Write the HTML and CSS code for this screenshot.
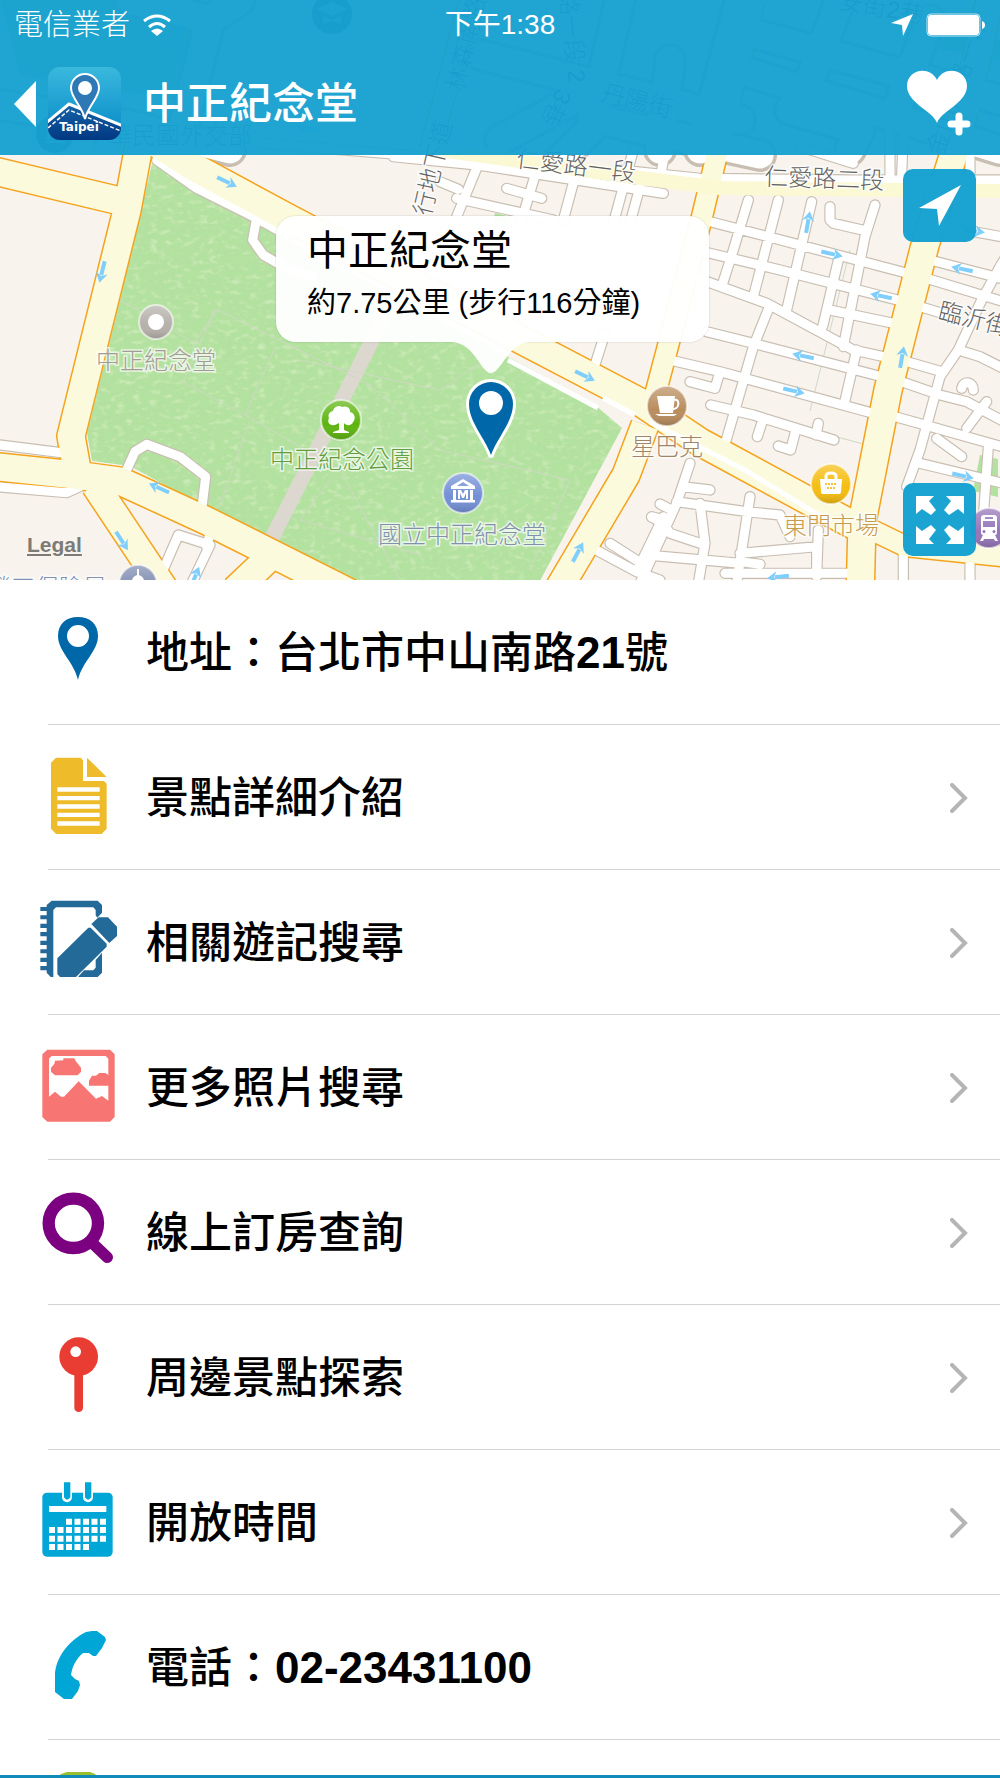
FILE: index.html
```
<!DOCTYPE html>
<html lang="zh-Hant">
<head>
<meta charset="utf-8">
<meta name="viewport" content="width=device-width, initial-scale=1">
<title>中正紀念堂</title>
<link rel="stylesheet" href="styles.css">
</head>
<body>
<div class="screen">
  <section class="stage">
    <svg class="map" viewBox="0 0 1000 580" preserveAspectRatio="xMidYMid slice" aria-hidden="true">
      <defs>
        <path id="park" d="M153 160L197 193L260 225L505 355L595 405L622 428L535 590L365 590L278 540L205 507L130 466L92 461L87 433L120 300Z"/>
        <clipPath id="park-clip"><use href="#park"/></clipPath>
        <filter id="grass" x="0" y="0" width="100%" height="100%">
          <feTurbulence type="fractalNoise" baseFrequency="0.12 0.2" numOctaves="2" seed="4"/>
          <feColorMatrix values="0 0 0 0 1  0 0 0 0 1  0 0 0 0 0.85  3 0 0 0 -1.5"/>
        </filter>
        <linearGradient id="shine" x2="0" y2="1"><stop offset="0" stop-color="#fff" stop-opacity=".3"/><stop offset=".6" stop-color="#fff" stop-opacity="0"/><stop offset="1" stop-color="#000" stop-opacity=".18"/></linearGradient>
        <g id="way"><path class="way" d="M-11 -2H3V2H-11Z"/><path class="way" d="M11 0L1 -6L4 0L1 6Z"/></g>
        <g id="streets">
          <g transform="translate(620 150) scale(.33333)">
            <path d="M385 150L340 300L305 410M475 150L400 440M575 155L500 480M765 165L735 260L670 590M655 330L608 530M450 465L400 590L310 900M710 600L672 765M270 215L520 280L870 372M250 305L480 360L840 452M220 380L440 460L700 600L800 622M260 545L400 580L800 684M150 630L300 665L760 790M272 765L400 795L642 870M210 695L285 715L297 675M595 820L588 855M425 820L412 860M475 888L512 900L525 850M630 480L830 522M630 170V210L640 220L740 243"/>
            <path d="M930 330L1200 400M920 385L1200 470M900 470L1000 500M860 635L965 665M845 695L960 735L1040 755L1200 840M825 800L1200 905M1200 250L1140 350L1085 450L1015 600L960 680L900 900L860 1010M1015 600L1080 620L1200 680M1025 715C1030 690 1060 695 1060 720M1100 755L1040 835M950 865L1025 920M900 940L1200 1012M1105 890L1090 1100M950 225L1200 270"/>
            <path d="M210 940L170 1060L60 1300M190 1010L270 1020M390 1040L350 1300M170 1055L380 1085L480 1095L510 1160M240 1060L255 1180L235 1300M120 1062L155 1080M95 1102L130 1120L150 1150L240 1180M-30 1180L80 1250M80 1215L360 1240M360 1210L590 1190L590 1280M595 1140L590 1280M360 1235L420 1243M315 1270L690 1270M850 1210V1300M1050 1240V1300"/>
            <path d="M40 0L-20 220M140 -20L125 60M0 60L240 85L700 90L1140 90M540 -10L700 40M810 -60V80M850 -60L845 80M1050 0V80"/>
          </g>
          <g transform="translate(260 150) scale(.33333)">
            <path d="M660 30L590 200M590 145L880 210M830 60L785 210M740 115L845 145M945 80L910 210M1140 110L1110 220M540 95L595 118M1035 550L1000 660M990 1190L1130 1265L1200 1290M1210 1100L1130 1265M1175 1100L1220 1112M400 20L650 45L1210 130M0 -20L500 20"/>
          </g>
          <g transform="translate(0 150) scale(.33333)">
            <path d="M0 885L185 908M-10 1010L200 1028L240 1010M380 960L405 905L440 883L540 920L617 980L605 1080M768 215L758 270L790 315L860 355L940 380M470 30L590 115L770 205L860 255M485 1270L535 1155L630 1185L575 1300M630 1150L620 1190"/>
          </g>
          <path d="M130 0L210 20L180 140M210 20L240 0M0 105L130 125L230 150M620 0L590 130L560 160M480 55L600 85L740 120M740 0L700 150M500 140L600 85M740 30L1000 100M740 70L1000 150M840 0L810 80M930 20L900 100M600 120L760 155M670 60L660 150M790 110L860 130L850 150"/>
        </g>
        <g id="avenues">
          <path class="w-major" d="M140 140L127 210L71 436L78 475M-10 170L120 201M-10 466L75 475L120 481L205 520L360 598M95 485L165 590M120 120L190 165L290 219L640 402L700 442L855 526M645 425L626 475L555 595M235 590L272 555M860 600L862 522L888 390L925 245L955 150L990 0"/>
          <path class="w-minor" d="M655 395L700 225L718 150L755 0M470 0L430 150M855 522L905 546L1010 557"/>
        </g>
      </defs>

      <rect class="land" width="1000" height="580"/>
      <path class="lawn" d="M0 0H200L175 100L20 75ZM980 455l18 4v38l-25 -6ZM495 213l16 4 -4 8 -14 -4ZM930 30L1000 40V60L920 45Z"/>
      <use class="lawn" href="#park"/>
      <rect x="80" y="150" width="550" height="430" filter="url(#grass)" clip-path="url(#park-clip)" opacity=".3"/>
      <path class="mall" d="M385 315L272 538"/>
      <path class="paths" d="M120 300L195 343L216 309L370 385L440 450L570 480L530 570M216 309L183 382L245 415L275 348M245 415L340 470L400 580M300 360L440 390L500 350M250 420L220 505M330 480L300 520L420 555M810 411L850 250M830 435L885 450"/>

      <use class="street-edge" href="#streets"/>
      <use class="avenue-edge" href="#avenues"/>
      <use class="street" href="#streets"/>
      <use class="avenue" href="#avenues"/>
      <path class="boulevard" d="M440 150L640 178L720 188L1010 191"/>
      <path class="lane" d="M508 360L598 408M603 398L635 415M650 422L745 470L830 522"/>

      <use href="#way" transform="translate(227 182) rotate(26)"/>
      <use href="#way" transform="translate(102 272) rotate(104)"/>
      <use href="#way" transform="translate(159 488) rotate(204)"/>
      <use href="#way" transform="translate(122 541) rotate(57)"/>
      <use href="#way" transform="translate(195 577) rotate(-68)"/>
      <use href="#way" transform="translate(585 376) rotate(26)"/>
      <use href="#way" transform="translate(578 552) rotate(-62)"/>
      <use href="#way" transform="translate(808 222) rotate(-80)"/>
      <use href="#way" transform="translate(832 254) rotate(13)"/>
      <use href="#way" transform="translate(881 296) rotate(192)"/>
      <use href="#way" transform="translate(803 356) rotate(192)"/>
      <use href="#way" transform="translate(794 391) rotate(13)"/>
      <use href="#way" transform="translate(902 357) rotate(-80)"/>
      <use href="#way" transform="translate(962 269) rotate(192)"/>
      <use href="#way" transform="translate(974 231) rotate(8)"/>
      <use href="#way" transform="translate(963 476) rotate(13)"/>
      <use href="#way" transform="translate(778 577) rotate(174)"/>
      <use href="#way" transform="translate(178 34) rotate(-70)"/>
      <use href="#way" transform="translate(308 128) rotate(188)"/>

      <g class="road-name">
        <text x="824" y="187" transform="rotate(2 824 187)">仁愛路二段</text>
        <text x="575" y="174" transform="rotate(7 575 174)">仁愛路一段</text>
        <text x="972" y="327" transform="rotate(14 972 327)">臨沂街</text>
        <text x="441" y="170" transform="rotate(-77 441 170)">行地下道</text>
        <text x="474" y="46" transform="rotate(-77 474 46)">林森南路</text>
        <text x="635" y="109" transform="rotate(14 635 109)">丹陽街</text>
        <text x="880" y="16" transform="rotate(10 880 16)">安街2巷</text>
        <text x="965" y="88" transform="rotate(-72 965 88)">金山南路一段</text>
        <text x="564" y="38" transform="rotate(84 564 38)">路一段 2</text>
        <text x="549" y="104" transform="rotate(116 549 104)">3巷</text>
      </g>
      <g class="place">
        <text x="156" y="369" fill="#a39c93">中正紀念堂</text>
        <text x="342" y="468" fill="#5f9e3c">中正紀念公園</text>
        <text x="462" y="543" fill="#7f92ad">國立中正紀念堂</text>
        <text x="667" y="455" fill="#a18569">星巴克</text>
        <text x="831" y="534" fill="#c59c50">東門市場</text>
        <text x="47" y="596" fill="#7f92b8">勞工保險局</text>
        <text x="168" y="144" fill="#5b6f92">中華民國外交部</text>
      </g>

      <g class="poi" transform="translate(156 322)"><circle r="17" fill="#b5b0aa"/><circle class="rim" r="17"/><circle r="8" fill="#fff"/></g>
      <g class="poi" transform="translate(341 420)"><circle r="20" fill="#5db50f"/><circle class="rim" r="20"/><path fill="#fff" d="M-2 10V3L-6 5C-12 6-14 2-12-2C-14-6-10-9-8-9C-7-14-1-15 1-13C6-15 10-11 9-8C14-7 15-1 12 2C11 6 5 6 3 3V10L8 12V13H-8V12Z"/></g>
      <g class="poi" transform="translate(463 493)"><circle r="20" fill="#7390d6"/><circle class="rim" r="20"/><path fill="#fff" fill-rule="evenodd" d="M0-14L12-7V-4H-12V-7ZM0-11L-6-7H6ZM-10-3H-7V7H-10ZM7-3H10V7H7ZM-5 6V-3H-2L0 1L2-3H5V6H3V0L1 5H-1L-3 0V6ZM-12 7H12V9.500H-12Z"/></g>
      <g class="poi" transform="translate(667 406)"><circle r="20" fill="#b98d5e"/><circle class="rim" r="20"/><path fill="#fff" d="M-10-10H8L6 7H-7Z"/><path d="M7-6C13-8 13 3 6 3" fill="none" stroke="#fff" stroke-width="2"/><path fill="#fff" d="M-12 8H10L7 10H-8Z"/></g>
      <g class="poi" transform="translate(831 484)"><circle r="20" fill="#f5bd0e"/><circle class="rim" r="20"/><path d="M-5-4V-8C-5-12 5-12 5-8V-4" fill="none" stroke="#fff" stroke-width="3"/><path fill="#fff" d="M-11-5H11L10 8Q10 10 8 10H-8Q-10 10-10 8Z"/><path d="M-6 0H6M-4 4H4" stroke="#f2c33a" stroke-width="2" stroke-dasharray="2 1"/></g>
      <g class="poi" transform="translate(989 528)"><circle r="20" fill="#9575b8"/><circle class="rim" r="20"/><path fill="#fff" fill-rule="evenodd" d="M-5-13H5Q8-13 8-10V5Q8 7 6 7L9 13H6L5 11H-5L-6 13H-9L-6 7Q-8 7-8 5V-10Q-8-13-5-13ZM-4-11V-9H4V-11ZM-6-7V-1H6V-7ZM-5 2A1.500 1.500 0 1 0-5 5A1.500 1.500 0 1 0-5 2ZM5 2A1.500 1.500 0 1 0 5 5A1.500 1.500 0 1 0 5 2Z"/></g>
      <g class="poi" transform="translate(138 584)"><circle r="19" fill="#7f8db0"/><circle class="rim" r="19"/><path fill="#fff" d="M-1-15H1V-9Q6-7 6-3H-6Q-6-7-1-9Z"/></g>
      <g class="poi" transform="translate(332 14)"><circle r="20" fill="#5b6f92"/><path fill="#bccbe0" d="M-16-5L0-12L16-5L0 2ZM-9 2L0 6L9 2V10L0 7L-9 10Z"/></g>
      <g class="poi" transform="translate(55 134)"><circle r="19" fill="#5b6f92"/><path fill="#bccbe0" d="M-10 9H10V7H-10ZM-8-4H-5V6H-8ZM-1-4H1V6H-1ZM5-4H8V6H5ZM-10-6L0-12L10-6Z"/></g>

      <path class="pin" d="M491 455C485 438 469 422 469 404A22 22 0 0 1 513 404C513 422 497 438 491 455Z"/>
      <circle cx="491" cy="403" r="12" fill="#fff"/>
    </svg>

    <header class="header">
      <div class="status">
        <div class="carrier">
          <span>電信業者</span>
          <svg width="30" height="22" viewBox="0 0 30 22" aria-hidden="true"><path d="M2 7Q15 -3 28 7M7 13Q15 6 23 13" fill="none" stroke="#fff" stroke-width="3"/><path d="M15 22L9 17Q15 12 21 17Z" fill="#fff"/></svg>
        </div>
        <time class="clock">下午1:38</time>
        <div class="power">
          <svg width="22" height="22" viewBox="0 0 22 22" aria-hidden="true"><path d="M22 0L12 22L11 11L0 9Z" fill="#fff"/></svg>
          <svg width="60" height="24" viewBox="0 0 60 24" aria-hidden="true"><rect x="1" y="1" width="53" height="22" rx="4" fill="none" stroke="#fff" stroke-opacity=".7"/><rect x="2" y="2" width="51" height="20" rx="3" fill="#fff"/><path d="M56 8Q59 9 59 12T56 16Z" fill="#fff"/></svg>
        </div>
      </div>
      <nav class="nav">
        <button class="back" type="button" aria-label="返回">
          <svg width="22" height="46" viewBox="0 0 22 46" aria-hidden="true"><path d="M0 23L22 0V46Z" fill="#fff"/></svg>
          <svg width="73" height="73" viewBox="0 0 73 73" aria-hidden="true">
            <defs>
              <linearGradient id="tile" x2="0" y2="1"><stop offset="0" stop-color="#3ab9dd"/><stop offset=".7" stop-color="#1496cd"/></linearGradient>
              <linearGradient id="ground" x2="0" y2="1"><stop offset="0" stop-color="#1565a8"/><stop offset="1" stop-color="#00347f"/></linearGradient>
              <clipPath id="tile-clip"><rect width="73" height="73" rx="12"/></clipPath>
            </defs>
            <g clip-path="url(#tile-clip)">
              <rect width="73" height="73" fill="url(#tile)"/>
              <path d="M-2 56L21 37L75 59V76H-2Z" fill="url(#ground)" stroke="#fff" stroke-width="3"/>
              <path d="M0 61L21 43L73 64" fill="none" stroke="#fff" stroke-width="1.500" stroke-dasharray="4 2"/>
              <path d="M37 52C34 39 23 31 23 21A14 14 0 0 1 51 21C51 31 40 39 37 52Z" fill="#2e78b6" stroke="#fff" stroke-width="2"/>
              <circle cx="37" cy="21" r="7" fill="#fff"/>
              <text class="tile-name" x="31" y="64">Taipei</text>
            </g>
          </svg>
        </button>
        <h1 class="title">中正紀念堂</h1>
        <button class="favorite" type="button" aria-label="加入最愛">
          <svg width="66" height="68" viewBox="0 0 66 68" aria-hidden="true"><path d="M31 53C27 41 1 33 1 16C1 -1 24 -5 31 10C38 -5 61 -1 61 16C61 33 35 41 31 53Z" fill="#fff"/><path d="M53 46V62M45 54H61" stroke="#fff" stroke-width="7" stroke-linecap="round"/></svg>
        </button>
      </nav>
    </header>

    <div class="map-area">
      <div class="callout">
        <h2 class="callout-title">中正紀念堂</h2>
        <p class="callout-text">約7.75公里 (步行116分鐘)</p>
        <svg class="callout-tip" width="76" height="31" viewBox="0 0 76 31" aria-hidden="true"><path d="M0 0H76C54 2 48 31 38 31S22 2 0 0Z" fill="#fff" fill-opacity=".96"/></svg>
      </div>
      <a class="legal" href="#legal">Legal</a>
      <button class="map-button locate" type="button" aria-label="定位">
        <svg width="42" height="42" viewBox="0 0 42 42" aria-hidden="true"><path d="M42 0L20 41L18 24L0 23Z" fill="#fff"/></svg>
      </button>
      <button class="map-button expand" type="button" aria-label="放大地圖">
        <svg width="48" height="48" viewBox="0 0 48 48" aria-hidden="true"><g fill="#fff"><path id="corner" d="M0 0H18L13 5L20 14L15 19L6 13L0 18Z"/><use href="#corner" transform="translate(48 0) scale(-1 1)"/><use href="#corner" transform="translate(0 48) scale(1 -1)"/><use href="#corner" transform="translate(48 48) scale(-1 -1)"/></g></svg>
      </button>
    </div>
  </section>

  <main class="list-wrap">
    <ul class="list">
      <li><div class="row">
        <svg class="icon" viewBox="0 0 80 80" aria-hidden="true"><path fill="#0068a9" fill-rule="evenodd" d="M40 70C36 52 20 41 20 26C20 14 28 7 40 7S60 14 60 26C60 41 44 52 40 70ZM40 15A11 11 0 0 0 40 37A11 11 0 0 0 40 15Z"/></svg>
        <span class="label">地址：台北市中山南路<b>21</b>號</span>
      </div></li>
      <li><a class="row" href="#intro">
        <svg class="icon" viewBox="54 75 240 240" aria-hidden="true"><path fill="#eebc2b" fill-rule="evenodd" d="M108 83H182L189 91V153H252L260 161V296L245 312H108L93 296V98ZM201 83L260 141H201ZM112 172V185H239V172ZM112 198V211H239V198ZM112 223V236H239V223ZM112 248V261H239V248ZM112 274V287H239V274Z"/></svg>
        <span class="label">景點詳細介紹</span>
        <svg class="chevron" viewBox="0 0 18 30" aria-hidden="true"><path d="M2 2L15 15L2 28"/></svg>
      </a></li>
      <li><a class="row" href="#journals">
        <svg class="icon" viewBox="54 510 240 240" aria-hidden="true"><path fill="#246a99" d="M95 512H233L246 525V548L232 563L227 556V540L220 532H108L100 540V741H92L80 728V721H61V708H80V696H61V683H80V670H61V658H80V645H61V632H80V619H61V606H80V594H61V581H80V568H61V556H80V543H61V531H80V525ZM112 685L205 593H212L260 641V650L168 741H120L112 732ZM214 582L236 562H264L291 590V618L268 639ZM246 668V728L233 741H174L192 721H220L227 713V690Z"/></svg>
        <span class="label">相關遊記搜尋</span>
        <svg class="chevron" viewBox="0 0 18 30" aria-hidden="true"><path d="M2 2L15 15L2 28"/></svg>
      </a></li>
      <li><a class="row" href="#photos">
        <svg class="icon" viewBox="54 75 240 240" aria-hidden="true"><path fill="#f77673" fill-rule="evenodd" d="M82 89H270L284 103V291L270 305H82L67 291V103ZM95 108L87 116V230L105 215L123 230H132L176 184L228 236L246 228L265 242V197H207V182L216 167H228L238 159H256L265 165V116L257 108ZM105 122L130 121V115H163L167 123L183 143V155L173 166H105L93 155V143L103 132Z"/></svg>
        <span class="label">更多照片搜尋</span>
        <svg class="chevron" viewBox="0 0 18 30" aria-hidden="true"><path d="M2 2L15 15L2 28"/></svg>
      </a></li>
      <li><a class="row" href="#booking">
        <svg class="icon" viewBox="54 510 240 240" aria-hidden="true"><circle cx="160" cy="610" r="74" fill="none" stroke="#7b0180" stroke-width="37"/><path d="M218 670L262 712" stroke="#7b0180" stroke-width="34" stroke-linecap="round"/></svg>
        <span class="label">線上訂房查詢</span>
        <svg class="chevron" viewBox="0 0 18 30" aria-hidden="true"><path d="M2 2L15 15L2 28"/></svg>
      </a></li>
      <li><a class="row" href="#nearby">
        <svg class="icon" viewBox="54 75 240 240" aria-hidden="true"><circle cx="176" cy="140" r="58" fill="#e93c32"/><path d="M176 190V293" stroke="#e93c32" stroke-width="26" stroke-linecap="round"/><circle cx="167" cy="125" r="16" fill="#fff"/></svg>
        <span class="label">周邊景點探索</span>
        <svg class="chevron" viewBox="0 0 18 30" aria-hidden="true"><path d="M2 2L15 15L2 28"/></svg>
      </a></li>
      <li><a class="row" href="#hours">
        <svg class="icon" viewBox="54 510 240 240" aria-hidden="true"><rect x="67" y="548" width="211" height="192" rx="14" fill="#00a7d6"/><path d="M141 548V562M204 548V562" stroke="#fff" stroke-width="30" stroke-linecap="round"/><path d="M132 517H151V562Q141 576 132 562ZM195 517H214V562Q204 576 195 562Z" fill="#00a7d6"/><path d="M87 597H259" stroke="#fff" stroke-width="18"/><path d="M138 635H259M87 660H259M87 686H259M87 711H208" stroke="#fff" stroke-width="18" stroke-dasharray="18 7.500"/></svg>
        <span class="label">開放時間</span>
        <svg class="chevron" viewBox="0 0 18 30" aria-hidden="true"><path d="M2 2L15 15L2 28"/></svg>
      </a></li>
      <li><a class="row" href="tel:02-23431100">
        <svg class="icon" viewBox="0 0 80 80" aria-hidden="true"><path fill="#00a7d6" d="M48 7L54 6H59L67 12L68 15L64 23L58 31L55 31L51 28L45 28C38 34 34 42 33 50L37 54L41 56L42 60L40 66L34 74H26L17 67V48C19 30 32 15 48 7Z"/></svg>
        <span class="label">電話：<b>02-23431100</b></span>
      </a></li>
      <li><div class="row">
        <svg class="icon" viewBox="0 0 80 80" aria-hidden="true"><path fill="#99c02e" d="M29 2H52L57 4L70 16V60L57 76H24L11 60V16L23 4Z"/></svg>
      </div></li>
    </ul>
  </main>
  <footer class="footer"></footer>
</div>
</body>
</html>
```
FILE: styles.css
```
* { box-sizing: border-box; }

body {
  margin: 0;
  background: #fff;
  color: #000;
  font-family: "Liberation Sans", "Noto Sans CJK TC", sans-serif;
}

h1, h2, p, ul { margin: 0; padding: 0; font-weight: 400; }
ul { list-style: none; }
svg { display: block; flex: none; }
button { border: 0; padding: 0; background: none; cursor: pointer; font: inherit; }
a { color: inherit; text-decoration: none; }

.screen { display: flex; flex-direction: column; height: 100vh; }

/* Map, running under the translucent header */
.stage { position: relative; flex: none; overflow: hidden; }
.map { position: absolute; inset: 0; width: 100%; height: 100%; }
.land { fill: #f8f4ed; }
.lawn { fill: #b3e19f; }
.mall { fill: none; stroke: #dcd8d0; stroke-width: 15; }
.paths { fill: none; stroke: #cfd8c4; stroke-width: 1; }
.street-edge, .street, .avenue-edge, .avenue { fill: none; stroke-linejoin: round; }
.street-edge { stroke: #c9beb2; stroke-width: 34; stroke-linecap: round; }
.street { stroke: #fff; stroke-width: 27; stroke-linecap: round; }
.avenue-edge { --edge: 3px; stroke: #f5a31c; }
.avenue { --edge: 0px; stroke: #fcfadc; }
.w-major { stroke-width: calc(27px + var(--edge)); }
.w-minor { stroke-width: calc(20px + var(--edge)); }
.boulevard { fill: none; stroke: #fbf8d4; stroke-width: 14; }
.lane { fill: none; stroke: #fff; stroke-width: 5; }
.way { fill: #80cefb; }
.road-name, .place {
  font-size: 24px;
  font-weight: 300;
  text-anchor: middle;
  paint-order: stroke;
  stroke: #fff;
  stroke-opacity: .7;
  stroke-width: 3;
}
.road-name { fill: #626262; }
.rim { fill: url(#shine); stroke: #fff; stroke-opacity: .6; stroke-width: 2; }
.pin { fill: #0068a9; stroke: #fff; stroke-width: 6; stroke-linejoin: round; paint-order: stroke; }

/* Header */
.header {
  position: relative;
  height: 155px;
  background: rgba(20, 160, 209, .95);
  color: #fff;
}
.status {
  display: grid;
  grid-template-columns: 1fr auto 1fr;
  align-items: center;
  height: 50px;
  padding: 0 14px;
}
.carrier { display: flex; align-items: center; gap: 12px; font-size: 29px; font-weight: 300; line-height: 50px; }
.clock { font-size: 28px; line-height: 50px; }
.power { display: flex; justify-content: flex-end; align-items: center; gap: 13px; }
.nav { display: flex; align-items: center; height: 105px; padding: 2px 28px 0 14px; }
.back { display: flex; align-items: center; gap: 12px; }
.tile-name { fill: #fff; font-size: 12px; font-weight: 700; text-anchor: middle; font-family: "DejaVu Sans", sans-serif; }
.title { flex: 1; margin-left: 22px; font-size: 43px; font-weight: 500; line-height: 60px; }

/* Overlays on the map */
.map-area { position: relative; height: 425px; }
.callout {
  position: absolute;
  top: 61px;
  left: calc(50% - 224px);
  width: 433px;
  height: 126px;
  padding: 9px 31px;
  border-radius: 20px;
  background: rgba(255, 255, 255, .96);
  box-shadow: 0 0 2px rgba(0, 0, 0, .2);
}
.callout-title { font-size: 41px; line-height: 52px; }
.callout-text { font-size: 29px; line-height: 52px; white-space: nowrap; }
.callout-tip { position: absolute; top: 100%; left: 177px; }
.legal {
  position: absolute;
  bottom: 20px;
  left: 27px;
  color: #7d7b77;
  font-size: 21px;
  font-weight: 700;
  line-height: 30px;
  text-decoration: underline;
}
.map-button {
  position: absolute;
  right: 24px;
  display: grid;
  place-items: center;
  width: 73px;
  height: 73px;
  border-radius: 10px;
  background: rgba(20, 160, 209, .97);
}
.locate { top: 14px; }
.expand { bottom: 24px; }

/* Detail list */
.list-wrap { flex: 1; min-height: 0; overflow-y: auto; scrollbar-width: none; }
.row {
  display: flex;
  align-items: center;
  gap: 28px;
  height: 145px;
  padding: 0 32px 0 38px;
}
.list li { background: linear-gradient(#d3d3d6, #d3d3d6) 48px 100% / 100% 1px no-repeat; }
.icon { width: 80px; height: 80px; margin-bottom: 5px; }
.label { flex: 1; font-size: 43px; font-weight: 500; line-height: 60px; }
.label b { font-size: 44px; }
.chevron { width: 18px; height: 30px; fill: none; stroke: #b5b5b5; stroke-width: 4; stroke-linecap: round; }

.footer { flex: none; height: 3px; background: #108bb9; }
```
